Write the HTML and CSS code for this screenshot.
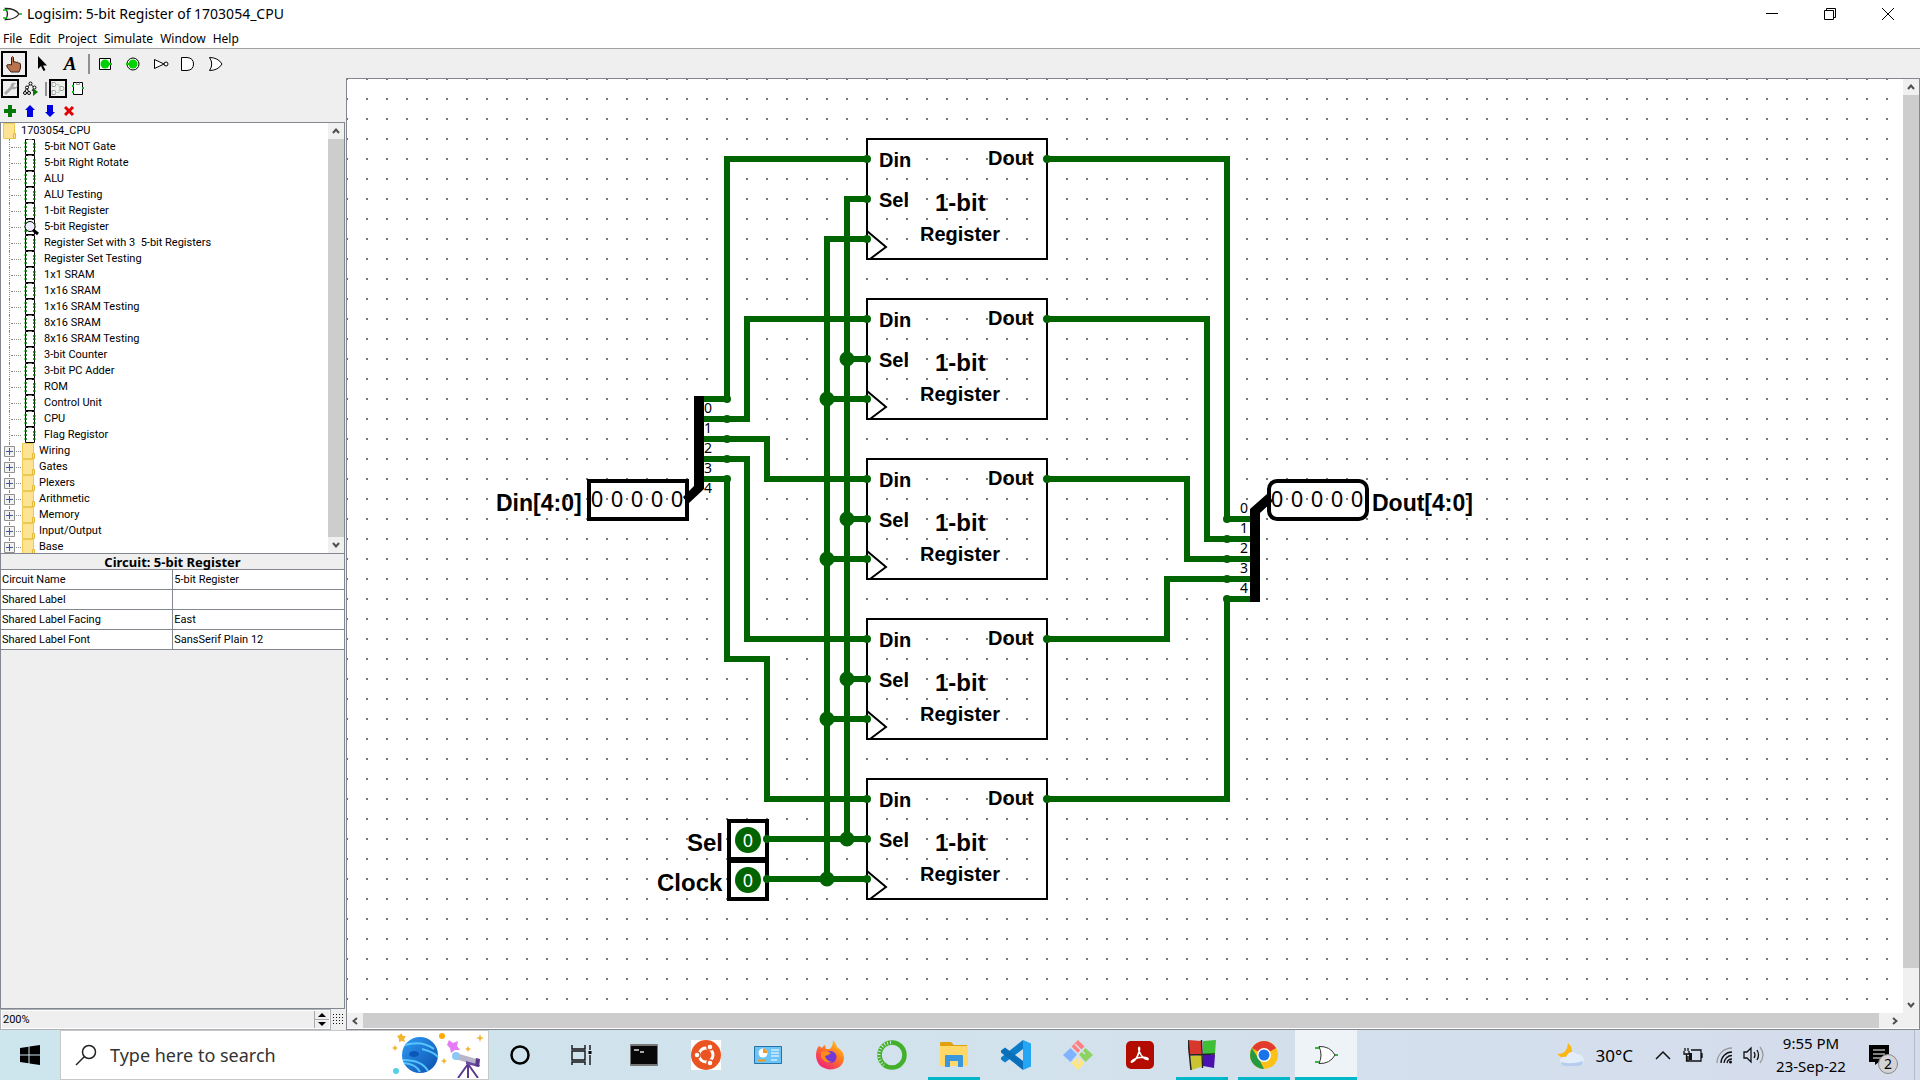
FILE: index.html
```html
<!DOCTYPE html>
<html lang="en">
<head>
<meta charset="utf-8">
<title>Logisim: 5-bit Register of 1703054_CPU</title>
<link rel="stylesheet" href="styles.css">
</head>
<body>
<svg class="defs" aria-hidden="true">
  <symbol id="i-chip" viewBox="0 0 13 16"><path d="M1.500.5H10.500V15.500H1.500z" fill="#fff" stroke="#000"/><path d="M4 .5H8" stroke="#888"/><path d="M0 4h3M0 8h3M0 12h3M9 5h3M9 8h3M9 12h3" stroke="#00b400"/><path d="M2 4h1M2 8h1M2 12h1M9 5h1M9 8h1M9 12h1" stroke="#040"/></symbol>
  <symbol id="i-folder" viewBox="0 0 13 16"><path d="M.5.5H11.500V15.500H.5z" fill="#ffe394" stroke="#ecc94f"/><path d="M10.500 10.500h2v5h-2z" fill="#ffe394" stroke="#e3b93a"/></symbol>
  <symbol id="i-plus" viewBox="0 0 11 11"><path d="M.5.5h10v10H.5z" fill="#f2f2f2" stroke="#919191"/><path d="M5.500 2v7M2 5.500h7" stroke="#3b5a9a"/></symbol>
  <symbol id="i-or" viewBox="0 0 20 16"><path d="M3.500 2.500C12 2.500 15 5 17 8C15 11 12 13.500 3.500 13.500C6 10 6 6 3.500 2.500Z" fill="#fff" stroke="#222" stroke-width="1.300"/><path d="M1 4h4M1 12h4M17 8h3" stroke="#00c400" stroke-width="1.500"/></symbol>
  <symbol id="i-up" viewBox="0 0 8 6"><path d="M1 5l3-3.500L7 5" fill="none" stroke="#505050" stroke-width="2"/></symbol>
  <symbol id="reg" overflow="visible"><path d="M0 0H180V120H0z" fill="none" stroke="#000" stroke-width="2"/><path d="M0 92L19 108L3 120" fill="none" stroke="#000" stroke-width="2"/></symbol>
</svg>

<header class="titlebar">
  <svg class="app-icon" width="20" height="16"><use href="#i-or"/></svg>
  <h1>Logisim: 5-bit Register of 1703054_CPU</h1>
  <div class="win-buttons">
    <button aria-label="Minimize"><svg width="12" height="12"><path d="M0 5.500H12" stroke="#000"/></svg></button>
    <button aria-label="Restore"><svg width="12" height="12"><path d="M.5 2.500h9v9h-9zM2.500 2.500V.5h9v9h-2" fill="none" stroke="#000"/></svg></button>
    <button aria-label="Close"><svg width="12" height="12"><path d="M0 0L12 12M12 0L0 12" stroke="#000"/></svg></button>
  </div>
</header>
<nav class="menubar">
  <button>File</button><button>Edit</button><button>Project</button><button>Simulate</button><button>Window</button><button>Help</button>
</nav>

<div class="toolbar">
  <button class="tool on" aria-label="Poke"><svg width="18" height="18"><path d="M6.500 10V2.500Q7.500.5 8.500 2.500V7Q10 6 11 7.500Q12.500 6.500 13.500 8Q15.500 7.500 15.500 10V13L14 17H6L2 12Q1 9.500 3.500 9.500z" fill="#b9744f" stroke="#3c1f12"/></svg></button>
  <button class="tool" aria-label="Select"><svg width="18" height="18"><path d="M5 1V14L8 11L10.500 16L12.500 15L10 10.500H14z"/></svg></button>
  <button class="tool letter" aria-label="Text">A</button>
  <span class="sep"></span>
  <button class="tool" aria-label="Input pin"><svg width="18" height="18"><path d="M3.500 3.500h11v11h-11z" fill="#fff" stroke="#000"/><circle cx="9" cy="9" r="4.500" fill="#00d200"/><path d="M9 9h7" stroke="#00d200" stroke-width="2"/></svg></button>
  <button class="tool" aria-label="Output pin"><svg width="18" height="18"><circle cx="9" cy="9" r="6" fill="#fff" stroke="#000"/><circle cx="9" cy="9" r="4.500" fill="#00d200"/><path d="M2 9h7" stroke="#00d200" stroke-width="2"/></svg></button>
  <button class="tool" aria-label="NOT gate"><svg width="18" height="18"><path d="M2.500 4.500L12 9L2.500 13.500z" fill="#fff" stroke="#000"/><circle cx="14" cy="9" r="2" fill="#fff" stroke="#000"/></svg></button>
  <button class="tool" aria-label="AND gate"><svg width="18" height="18"><path d="M1.500 2.500H7Q13.500 3 13.500 9T7 15.500H1.500z" fill="#fff" stroke="#000"/></svg></button>
  <button class="tool" aria-label="OR gate"><svg width="18" height="18"><path d="M1.500 2.500Q10 2.500 14 9Q10 15.500 1.500 15.500Q6 9 1.500 2.500z" fill="#fff" stroke="#000"/></svg></button>
</div>

<main class="workspace">
  <aside class="explorer">
    <div class="bar">
      <button class="small on" aria-label="Project view"><svg width="15" height="15"><path d="M2 13L8.500 6.500" stroke="#aaa" stroke-width="3"/><path d="M8 3Q10 1 13 2L10.500 4.500L11 6H13L14.500 4Q14.500 8 10.500 8.500L7 7z" fill="#aaa"/></svg></button>
      <button class="small" aria-label="Simulation view"><svg width="15" height="15"><path d="M7.500 3L4 6.500L1.500 11M4 6.500L5.500 11M7.500 3L11 6.500L9 10" fill="none" stroke="#000"/><g fill="#fff" stroke="#000"><circle cx="7.500" cy="2.500" r="1.500"/><circle cx="4" cy="6.500" r="1.500"/><circle cx="2" cy="12" r="1.500"/><circle cx="6" cy="12" r="1.500"/><circle cx="11.500" cy="6.500" r="1.500"/></g><path d="M10 7V15L15 11z" fill="#0a7a0a"/></svg></button>
      <span class="sep"></span>
      <button class="small on" aria-label="Edit layout"><svg width="15" height="15" fill="#f6f6f6" stroke="#a0a0a0"><path d="M1 1.500h3q2 1.500 0 4H1zM1 9.500h3q2 1.500 0 4H1zM9 5.500h3q2 1.500 0 4H9z"/><path d="M6 3.500h2v3M6 11.500h2v-3" fill="none" stroke="#a5dca5"/></svg></button>
      <button class="small" aria-label="Edit appearance"><svg width="13" height="15"><path d="M1.500 1.500h9v12h-9z" fill="#fff" stroke="#000"/><path d="M4.500 1.500v2h3v-2" fill="none" stroke="#999"/><path d="M0 5h2M10 7h2M0 11h2" stroke="#00c400" stroke-width="2"/></svg></button>
    </div>
    <div class="bar edit">
      <button class="small" aria-label="Add circuit"><svg width="12" height="12"><path d="M6 0V12M0 6H12" stroke="#087808" stroke-width="4"/></svg></button>
      <button class="small" aria-label="Move up"><svg width="10" height="12"><path d="M5 0L10 5H8V12H2V5H0z" fill="#0000e0"/></svg></button>
      <button class="small" aria-label="Move down"><svg width="10" height="12"><path d="M5 12L10 7H8V0H2V7H0z" fill="#0000e0"/></svg></button>
      <button class="small" aria-label="Remove circuit"><svg width="12" height="12"><path d="M1 2L9 10M9 2L1 10" stroke="#e00000" stroke-width="3"/></svg></button>
    </div>
    <div class="tree-box">
      <ul class="tree">
        <li class="root"><svg width="13" height="16"><use href="#i-folder"/></svg>1703054_CPU</li>
        <li class="leaf"><svg width="13" height="16"><use href="#i-chip"/></svg>5-bit NOT Gate</li>
        <li class="leaf"><svg width="13" height="16"><use href="#i-chip"/></svg>5-bit Right Rotate</li>
        <li class="leaf"><svg width="13" height="16"><use href="#i-chip"/></svg>ALU</li>
        <li class="leaf"><svg width="13" height="16"><use href="#i-chip"/></svg>ALU Testing</li>
        <li class="leaf"><svg width="13" height="16"><use href="#i-chip"/></svg>1-bit Register</li>
        <li class="leaf"><svg width="13" height="16" overflow="visible"><use href="#i-chip" width="13" height="16"/><circle cx="6" cy="7.500" r="5" fill="#eef" stroke="#000"/><path d="M9 11L14 15" stroke="#000" stroke-width="3"/></svg>5-bit Register</li>
        <li class="leaf"><svg width="13" height="16"><use href="#i-chip"/></svg>Register Set with 3&nbsp; 5-bit Registers</li>
        <li class="leaf"><svg width="13" height="16"><use href="#i-chip"/></svg>Register Set Testing</li>
        <li class="leaf"><svg width="13" height="16"><use href="#i-chip"/></svg>1x1 SRAM</li>
        <li class="leaf"><svg width="13" height="16"><use href="#i-chip"/></svg>1x16 SRAM</li>
        <li class="leaf"><svg width="13" height="16"><use href="#i-chip"/></svg>1x16 SRAM Testing</li>
        <li class="leaf"><svg width="13" height="16"><use href="#i-chip"/></svg>8x16 SRAM</li>
        <li class="leaf"><svg width="13" height="16"><use href="#i-chip"/></svg>8x16 SRAM Testing</li>
        <li class="leaf"><svg width="13" height="16"><use href="#i-chip"/></svg>3-bit Counter</li>
        <li class="leaf"><svg width="13" height="16"><use href="#i-chip"/></svg>3-bit PC Adder</li>
        <li class="leaf"><svg width="13" height="16"><use href="#i-chip"/></svg>ROM</li>
        <li class="leaf"><svg width="13" height="16"><use href="#i-chip"/></svg>Control Unit</li>
        <li class="leaf"><svg width="13" height="16"><use href="#i-chip"/></svg>CPU</li>
        <li class="leaf"><svg width="13" height="16"><use href="#i-chip"/></svg>Flag Registor</li>
        <li class="lib"><svg width="11" height="11"><use href="#i-plus"/></svg><svg width="13" height="16"><use href="#i-folder"/></svg>Wiring</li>
        <li class="lib"><svg width="11" height="11"><use href="#i-plus"/></svg><svg width="13" height="16"><use href="#i-folder"/></svg>Gates</li>
        <li class="lib"><svg width="11" height="11"><use href="#i-plus"/></svg><svg width="13" height="16"><use href="#i-folder"/></svg>Plexers</li>
        <li class="lib"><svg width="11" height="11"><use href="#i-plus"/></svg><svg width="13" height="16"><use href="#i-folder"/></svg>Arithmetic</li>
        <li class="lib"><svg width="11" height="11"><use href="#i-plus"/></svg><svg width="13" height="16"><use href="#i-folder"/></svg>Memory</li>
        <li class="lib"><svg width="11" height="11"><use href="#i-plus"/></svg><svg width="13" height="16"><use href="#i-folder"/></svg>Input/Output</li>
        <li class="lib"><svg width="11" height="11"><use href="#i-plus"/></svg><svg width="13" height="16"><use href="#i-folder"/></svg>Base</li>
      </ul>
      <div class="vbar">
        <button class="arrow" aria-label="Scroll up"><svg width="8" height="6"><use href="#i-up"/></svg></button>
        <div class="thumb full"></div>
        <button class="arrow down" aria-label="Scroll down"><svg width="8" height="6"><use href="#i-up"/></svg></button>
      </div>
    </div>
    <section class="props">
      <h2>Circuit: 5-bit Register</h2>
      <table>
        <tr><th scope="row">Circuit Name</th><td>5-bit Register</td></tr>
        <tr><th scope="row">Shared Label</th><td></td></tr>
        <tr><th scope="row">Shared Label Facing</th><td>East</td></tr>
        <tr><th scope="row">Shared Label Font</th><td>SansSerif Plain 12</td></tr>
      </table>
    </section>
    <div class="zoom">
      <div class="spinner">
        <input type="text" value="200%" aria-label="Zoom">
        <div class="steps">
          <button aria-label="Zoom in"><svg width="8" height="4"><path d="M4 0L8 4H0z"/></svg></button>
          <button aria-label="Zoom out"><svg width="8" height="4"><path d="M0 0H8L4 4z"/></svg></button>
        </div>
      </div>
      <button class="grid-toggle" aria-label="Show grid"><svg width="11" height="11" stroke="#111" stroke-dasharray="1 2"><path d="M0 .5H11M0 3.500H11M0 6.500H11M0 9.500H11"/></svg></button>
    </div>
  </aside>

  <section class="canvas-pane">
    <div class="canvas">
      <svg class="circuit" role="img" aria-label="5-bit register circuit">
        <defs><pattern id="dots" x="-1" y="-1" width="20" height="20" patternUnits="userSpaceOnUse"><path d="M0 0h2v2H0z" fill="#777"/></pattern></defs>
        <rect width="100%" height="100%" fill="url(#dots)"/>

        <g class="wire">
          <path d="M357 320H380V80H520"/>
          <path d="M357 340H400V240H520"/>
          <path d="M357 360H420V400H520"/>
          <path d="M357 380H400V560H520"/>
          <path d="M357 400H380V580H420V720H520"/>
          <path d="M520 120H500V760M500 280H520M500 440H520M500 600H520M422 760H520"/>
          <path d="M520 160H480V800M480 320H520M480 480H520M480 640H520M422 800H520"/>
          <path d="M700 80H880V440H903"/>
          <path d="M700 240H860V460H903"/>
          <path d="M700 400H840V480H903"/>
          <path d="M700 560H820V500H903"/>
          <path d="M700 720H880V520H903"/>
        </g>

        <use href="#reg" x="520" y="60"/>
        <use href="#reg" x="520" y="220"/>
        <use href="#reg" x="520" y="380"/>
        <use href="#reg" x="520" y="540"/>
        <use href="#reg" x="520" y="700"/>

        <path class="ends" d="M380 320h0M380 340h0M380 360h0M380 380h0M380 400h0M880 440h0M880 460h0M880 480h0M880 500h0M880 520h0M520 80h0M520 120h0M520 160h0M700 80h0M520 240h0M520 280h0M520 320h0M700 240h0M520 400h0M520 440h0M520 480h0M700 400h0M520 560h0M520 600h0M520 640h0M700 560h0M520 720h0M520 760h0M520 800h0M700 720h0"/>
        <path class="joints" d="M500 280h0M500 440h0M500 600h0M500 760h0M480 320h0M480 480h0M480 640h0M480 800h0"/>

        <g class="port"><text x="532" y="88">Din</text><text x="532" y="128">Sel</text><text x="641" y="86">Dout</text><text x="573" y="162">Register</text><text class="big" x="588" y="132">1-bit</text></g>
        <g class="port"><text x="532" y="248">Din</text><text x="532" y="288">Sel</text><text x="641" y="246">Dout</text><text x="573" y="322">Register</text><text class="big" x="588" y="292">1-bit</text></g>
        <g class="port"><text x="532" y="408">Din</text><text x="532" y="448">Sel</text><text x="641" y="406">Dout</text><text x="573" y="482">Register</text><text class="big" x="588" y="452">1-bit</text></g>
        <g class="port"><text x="532" y="568">Din</text><text x="532" y="608">Sel</text><text x="641" y="566">Dout</text><text x="573" y="642">Register</text><text class="big" x="588" y="612">1-bit</text></g>
        <g class="port"><text x="532" y="728">Din</text><text x="532" y="768">Sel</text><text x="641" y="726">Dout</text><text x="573" y="802">Register</text><text class="big" x="588" y="772">1-bit</text></g>

        <path d="M347 317H357V410L341 425L336 418L347 407z"/>
        <path d="M903 430L920 415L926 422L913 434V523H903z"/>
        <g class="bit"><text x="357" y="334">0</text><text x="357" y="354">1</text><text x="357" y="374">2</text><text x="357" y="394">3</text><text x="357" y="414">4</text></g>
        <g class="bit"><text x="893" y="434">0</text><text x="893" y="454">1</text><text x="893" y="474">2</text><text x="893" y="494">3</text><text x="893" y="514">4</text></g>

        <g fill="none" stroke="#000" stroke-width="4">
          <rect x="242" y="402" width="98" height="38"/>
          <rect x="922" y="402" width="98" height="38" rx="8"/>
          <rect x="382" y="742" width="38" height="38"/>
          <rect x="382" y="782" width="38" height="38"/>
        </g>
        <g class="value"><text x="250" y="428">0</text><text x="270" y="428">0</text><text x="290" y="428">0</text><text x="310" y="428">0</text><text x="330" y="428">0</text></g>
        <g class="value"><text x="930" y="428">0</text><text x="950" y="428">0</text><text x="970" y="428">0</text><text x="990" y="428">0</text><text x="1010" y="428">0</text></g>
        <circle cx="401" cy="761" r="13" fill="#006400"/><circle cx="401" cy="801" r="13" fill="#006400"/>
        <path class="ends" d="M420 760h0M420 800h0"/>
        <g class="value lit"><text x="401" y="768">0</text><text x="401" y="808">0</text></g>
        <g class="label"><text x="340" y="772">Sel</text><text x="310" y="812">Clock</text></g>
        <g class="label bus"><text x="149" y="432">Din[4:0]</text><text x="1025" y="432">Dout[4:0]</text></g>
      </svg>
      <div class="vbar">
        <button class="arrow" aria-label="Scroll up"><svg width="8" height="6"><use href="#i-up"/></svg></button>
        <div class="thumb tall"></div><div class="rest"></div>
        <button class="arrow down" aria-label="Scroll down"><svg width="8" height="6"><use href="#i-up"/></svg></button>
      </div>
    </div>
    <div class="hbar">
      <button class="arrow left" aria-label="Scroll left"><svg width="8" height="6"><use href="#i-up"/></svg></button>
      <div class="thumb wide"></div>
      <button class="arrow right" aria-label="Scroll right"><svg width="8" height="6"><use href="#i-up"/></svg></button>
    </div>
  </section>
</main>

<footer class="taskbar">
  <button class="start" aria-label="Start"><svg width="20" height="20"><path d="M0 3L8.500 1.800V9.500H0zM9.500 1.600L20 0V9.500H9.500zM0 10.500H8.500V18.200L0 17zM9.500 10.500H20V20L9.500 18.400z"/></svg></button>
  <div class="search">
    <svg width="22" height="22"><circle cx="14" cy="8" r="6.500" fill="none" stroke="#222" stroke-width="1.500"/><path d="M9.500 12.500L1 21" stroke="#222" stroke-width="1.500"/></svg>
    <input type="text" placeholder="Type here to search" aria-label="Search">
    <svg width="96" height="46">
      <defs><linearGradient id="pl" x1="0" x2="1" y1="0" y2="1"><stop offset="0" stop-color="#2f9cf4"/><stop offset="1" stop-color="#0b4fae"/></linearGradient></defs>
      <circle cx="28" cy="23" r="18" fill="url(#pl)"/><path d="M13 13Q30 8 42 17M11 28Q30 28 36 39M12 31Q24 32 28 40M30 17Q42 20 46 25" fill="none" stroke="#55c4ff" stroke-width="2"/><ellipse cx="22" cy="22" rx="5" ry="3" fill="#0a57b8"/>
      <g fill="#f2b531"><path d="M9 1l2 3 3 0-2 3 1 3-3-1-3 1 0-3-2-3 3-1zM88 2l1 3 3 1-3 1-1 3-1-3-3-1 3-1zM3 13l1 2 2 1-2 1-1 2-1-2-2-1 2-1zM76 14l1 2 2 1-2 1-1 2-1-2-2-1 2-1zM52 26l1 2 2 1-2 1-1 2-1-2-2-1 2-1z"/><circle cx="50" cy="4" r="3" fill="#ffab00"/></g>
      <path d="M57 8l4 3 5-2-1 5 3 4-5 0-4 3-1-5-3-3z" fill="#e57cf5"/><circle cx="4" cy="39" r="3" fill="#55cfe8"/>
      <path d="M76 32L66 46M76 32V46M76 32L86 46" stroke="#5b3a8e" stroke-width="2"/><path d="M64 21L88 28L87 34L63 27z" fill="#b9b6c9"/><path d="M74 29L88 33L87 35L74 32z" fill="#6a4a9e"/><circle cx="64" cy="24" r="4" fill="#8cc8f5"/><path d="M84 26l4 1-1 8-4-1z" fill="#5b3a8e"/>
    </svg>
  </div>
  <div class="apps">
    <button aria-label="Cortana"><svg width="20" height="20"><circle cx="10" cy="10" r="8.500" fill="none" stroke="#000" stroke-width="2.500"/></svg></button>
    <button aria-label="Task View"><svg width="22" height="20" fill="none" stroke="#111" stroke-width="1.400"><path d="M1 0V4H14V0M1 6H14V15H1zM1 20V17H14V20M19 0V5M19 10V20"/><path d="M17.500 6h3v3h-3z" fill="#000" stroke="none"/></svg></button>
    <button aria-label="Terminal"><svg width="28" height="22"><rect width="28" height="22" rx="1" fill="#777"/><rect x="1" y="2" width="26" height="18" fill="#080808"/><path d="M4 6h5M10 8h4" stroke="#ddd" stroke-width="1.500"/></svg></button>
    <button aria-label="Ubuntu"><svg width="30" height="30"><path d="M0 0H30V30H0z" fill="#fff"/><circle cx="15" cy="15" r="15" fill="#e95420"/><circle cx="15" cy="15" r="7" fill="none" stroke="#fff" stroke-width="3"/><g fill="#fff" stroke="#e95420" stroke-width="1.500"><circle cx="6" cy="15" r="3"/><circle cx="19" cy="7" r="3"/><circle cx="19" cy="23" r="3"/></g></svg></button>
    <button aria-label="Control Panel"><svg width="28" height="18"><path d="M.5.5h27v17H.5z" fill="#6cc3f5" stroke="#2374ad"/><circle cx="9" cy="7" r="4.500" fill="#fff"/><path d="M9 7V2.500A4.500 4.500 0 0 1 13.500 7z" fill="#f39a1e"/><path d="M17 4h8M17 7h8M17 10h8M17 14h6" stroke="#fff"/><path d="M4 14.500h8" stroke="#f39a1e" stroke-width="2"/></svg></button>
    <button aria-label="Firefox"><svg width="28" height="30"><defs><linearGradient id="ff" x1="1" x2=".3" y1="0" y2="1"><stop offset="0" stop-color="#ffe226"/><stop offset=".5" stop-color="#ff7a1f"/><stop offset="1" stop-color="#f0227a"/></linearGradient></defs><path d="M3 6L6 8Q8 5 9 5L10 9H14Q17 6 17 0Q20 3 21 7Q28 11 28 18Q27 29 14 29.500Q1 28 0 16Q0 9 3 6z" fill="url(#ff)"/><circle cx="14.500" cy="17" r="6" fill="#7339d6"/><path d="M5 12Q10 10 15 13Q12 16 9 16Q10 21 16 22Q9 24 5 17z" fill="#ff8b1d"/></svg></button>
    <button aria-label="Anaconda"><svg width="30" height="30"><circle cx="15" cy="15" r="12.500" fill="none" stroke="#43b02a" stroke-width="4.500"/><path d="M14 2.500A12.500 12.500 0 0 0 7 25" fill="none" stroke="#d5e6ee" stroke-width="3" stroke-dasharray="1 2"/></svg></button>
    <button class="run" aria-label="File Explorer"><svg width="28" height="26"><path d="M0 1Q0 0 1 0H11L14 3H27V8H0z" fill="#e0a010"/><path d="M0 4H28V24H0z" fill="#ffd868"/><path d="M5 25V14Q5 13 6 13H22Q23 13 23 14V25H18V19H10V25z" fill="#3a96dd"/></svg></button>
    <button aria-label="Visual Studio Code"><svg width="30" height="30"><path d="M22 0V9L4 22.500L0 19.500V17.500z" fill="#0a7cc8"/><path d="M22 30V21L4 7.500L0 10.500V12.500z" fill="#0a6fb8"/><path d="M22 0L30 3.500V26.500L22 30z" fill="#24a6f2"/></svg></button>
    <button aria-label="Git"><svg width="30" height="30"><path d="M15 0L21.500 6.500L15 13L8.500 6.500z" fill="#ff8080"/><path d="M7.500 8L14 14.500L7.500 22L0 15z" fill="#80b3ff"/><path d="M22.500 8L30 15L22.500 22L16 14.500z" fill="#8dd35f"/><path d="M15 16.500L21.500 23L15 30L8.500 23z" fill="#ffe680"/><path d="M12 4L18 10L15 15V24M18 10L22 14" fill="none" stroke="#d8e2ec" stroke-width="1.500"/></svg></button>
    <button aria-label="Acrobat"><svg width="28" height="28"><rect width="28" height="28" rx="5" fill="#b30b00"/><path d="M6 21C10 20 14 11 13.500 7C13 5 12 8 13.500 11C15 15 19 19 22 18.500C23 16 14 15 8 18.500C5 20 5 22 6 21z" fill="none" stroke="#fff" stroke-width="1.600"/></svg></button>
    <button class="run" aria-label="Code::Blocks"><svg width="28" height="30"><path d="M0 0L13 1V14L1 15z" fill="#d8382c"/><path d="M15 1L28 0L27 14L15 14z" fill="#3fbf36"/><path d="M2 16L13 15V27L3 30z" fill="#c9c430"/><path d="M15 15H27L26 28L15 26z" fill="#4a12ae"/><path d="M13.500 0L14.500 28M1 15L27 14M0 0L3 30" stroke="#222" stroke-width="1.500"/></svg></button>
    <button class="run" aria-label="Chrome"><svg width="28" height="28"><circle cx="14" cy="14" r="14" fill="#fbc116"/><path d="M14 14L1.900 7A14 14 0 0 1 26.100 7z" fill="#e33b2e"/><path d="M1.900 7L10 20L14 28A14 14 0 0 1 1.900 7z" fill="#269a43"/><path d="M14 7H26.100L14 9z" fill="#e33b2e"/><circle cx="14" cy="14" r="7" fill="#fff"/><circle cx="14" cy="14" r="5.500" fill="#1a73e8"/></svg></button>
    <button class="run active" aria-label="Logisim"><svg width="25" height="20"><path d="M5 1.500Q16 1 21 10Q16 19 5 18.500Q9 10 5 1.500z" fill="#fff" stroke="#333"/><path d="M1 3h4M1 17h4M21 10h3" stroke="#00a000" stroke-width="1.500"/></svg></button>
  </div>
  <div class="tray">
    <svg width="28" height="24"><path d="M11 0Q18 6 13 13Q7 18 0 11Q10 12 11 0z" fill="#fcb714"/><path d="M8 23Q2 22 3 17Q5 13 9 14Q13 6 20 11Q27 11 27 18Q26 23 21 23z" fill="#e3edfa"/><path d="M8 23Q3 22 4 19Q15 22 26 18Q26 23 21 23z" fill="#b6cdf0"/></svg>
    <span class="temp">30°C</span>
    <svg class="chev" width="16" height="10"><path d="M1 9L8 2L15 9" fill="none" stroke="#111" stroke-width="1.500"/></svg>
    <svg class="batt" width="20" height="14" fill="none" stroke="#111" stroke-width="1.300"><path d="M8 2H18V13H5V8M19 5V10M1 3V6H6V3M2 0V3M5 0V3M3.500 6V13H5"/><path d="M6 5h3v7H6z" fill="#111" stroke="none"/></svg>
    <svg class="wifi" width="17" height="17" fill="none" stroke-width="1.300"><path d="M1 16A15 15 0 0 1 16 1" stroke="#999"/><path d="M5 16A11 11 0 0 1 16 5M8 16A8 8 0 0 1 16 8.500M11 16A5 5 0 0 1 16 12" stroke="#111"/><circle cx="14.500" cy="15" r="1.500" fill="#111"/></svg>
    <svg class="vol" width="21" height="18" fill="none" stroke="#111" stroke-width="1.300"><path d="M1 6H4L8 2V16L4 12H1zM11 6Q13 9 11 12M14 4Q17 9 14 14"/><path d="M17 1Q23 9 17 17" stroke="#999"/></svg>
    <div class="clock"><span>9:55 PM</span><span>23-Sep-22</span></div>
    <button class="note" aria-label="Notifications"><svg width="20" height="20"><path d="M0 0H20V17H10L6 20V17H0z"/><path d="M4 5H16M4 9H16M4 13H12" stroke="#fff"/></svg><span class="badge">2</span></button>
  </div>
</footer>
</body>
</html>
```
FILE: styles.css
```css
* { box-sizing: border-box; }
body {
  margin: 0;
  height: 100vh;
  display: flex;
  flex-direction: column;
  overflow: hidden;
  background: #efefef;
  color: #000;
  font-family: "Noto Sans", sans-serif;
  font-size: 11px;
}
svg { display: block; flex: none; }
.defs { position: absolute; width: 0; height: 0; }
button {
  margin: 0;
  padding: 0;
  border: 0;
  background: none;
  color: inherit;
  font: inherit;
  display: flex;
  align-items: center;
  justify-content: center;
}

/* window frame */
.titlebar { display: flex; align-items: center; height: 28px; padding-left: 2px; background: #fff; flex: none; }
.titlebar h1 { margin: 0 0 0 5px; font-size: 14px; font-weight: 400; line-height: 28px; }
.win-buttons { display: flex; margin-left: auto; padding-right: 3px; }
.win-buttons button { width: 58px; height: 28px; }
.menubar { display: flex; gap: 7px; height: 21px; padding-left: 3px; background: #fff; border-bottom: 1px solid #a0a0a0; flex: none; font-size: 12px; }

/* main toolbar */
.toolbar { display: flex; align-items: center; height: 29px; padding: 1px 0 0 1px; flex: none; gap: 2px; }
.tool { width: 26px; height: 26px; }
.tool.on, .small.on { border: 2px solid #000; }
.letter { font: italic bold 19px "Liberation Serif", serif; }
.sep { width: 2px; height: 20px; background: #909090; margin: 0 0 0 3px; }

.workspace { display: flex; flex: 1; min-height: 0; }
.explorer { display: flex; flex-direction: column; width: 346px; flex: none; font-family: Roboto, sans-serif; }
.bar { display: flex; gap: 2px; height: 20px; padding: 1px 0 0 1px; flex: none; }
.bar.edit { height: 24px; padding-top: 3px; }
.small { width: 18px; height: 19px; }
.bar .sep { height: 14px; margin: 3px 0 0 4px; }

/* project tree */
.tree-box { display: flex; height: 432px; flex: none; border: 1px solid #828790; margin-right: 1px; background: #fff; overflow: hidden; }
.tree { flex: 1; margin: 0; padding: 0; list-style: none; }
.tree li { display: flex; align-items: center; height: 16px; line-height: 16px; white-space: nowrap; position: relative; }
.root { padding-left: 2px; gap: 5px; }
.leaf { padding-left: 23px; gap: 7px; }
.lib { padding-left: 3px; gap: 7px; }
.lib svg + svg { margin-right: -3px; }
.leaf::before, .lib::before { content: ""; position: absolute; left: 8px; top: 0; height: 16px; border-left: 1px dotted #888; }
.leaf::after, .lib::after { content: ""; position: absolute; left: 10px; top: 8px; width: 10px; border-top: 1px dotted #888; }
.lib svg { position: relative; z-index: 1; }

/* scroll bars */
.vbar { display: flex; flex-direction: column; width: 16px; background: #f0f0f0; flex: none; }
.hbar { display: flex; height: 16px; padding-right: 16px; background: #f0f0f0; border-bottom: 1px solid #fff; flex: none; }
.arrow { width: 16px; height: 16px; flex: none; }
.thumb { background: #cdcdcd; }
.thumb.full { flex: 1; }
.thumb.tall { flex: 871 1 0; }
.rest { flex: 29 1 0; }
.thumb.wide { flex: 1; margin-right: 8px; }
.down svg { transform: rotate(180deg); }
.left svg { transform: rotate(-90deg); }
.right svg { transform: rotate(90deg); }

/* attribute table */
.props { flex: 1; min-height: 0; margin-right: 1px; border: 1px solid #828790; border-top: 0; }
.props h2 { margin: 0; height: 15px; font: bold 13px/16px "Noto Sans", sans-serif; text-align: center; }
.props table { width: 344px; border-collapse: collapse; table-layout: fixed; }
.props th, .props td { height: 20px; padding: 0 1px; border: 1px solid #828790; background: #fff; font-weight: 400; text-align: left; line-height: 18px; }
.props th { border-left: 0; }

.zoom { display: flex; height: 21px; flex: none; gap: 2px; }
.spinner { display: flex; width: 331px; border: 1px solid #adb2b8; padding: 1px; background: #fff; }
.spinner input { flex: 1; min-width: 0; padding: 0 0 0 1px; border: 0; background: #efefef; font: inherit; }
.steps { display: flex; flex-direction: column; width: 15px; background: #efefef; border-left: 1px solid #aaa; }
.steps button { flex: 1; }
.steps button + button { border-top: 1px solid #aaa; }
.grid-toggle { width: 11px; height: 20px; }

/* circuit canvas */
.canvas-pane { display: flex; flex-direction: column; flex: 1; min-width: 0; border: 1px solid #828790; }
.canvas { display: flex; flex: 1; min-height: 0; background: #fff; }
.circuit { flex: 1; min-width: 0; height: 100%; }
.wire { fill: none; stroke: #006400; stroke-width: 6; }
.ends, .joints { stroke: #006400; stroke-linecap: round; stroke-width: 8; }
.joints { stroke-width: 15; }
.port, .label { font: bold 20px "Liberation Sans", sans-serif; }
.label, .port .big { font-size: 24px; }
.label.bus { font-size: 23px; }
.bit { font-size: 14px; }
.value { font-size: 22px; text-anchor: middle; }
.lit { font-size: 18px; fill: #fff; }

/* taskbar */
.taskbar { display: flex; height: 50px; flex: none; background: linear-gradient(90deg, #cde5ed, #d2e2ec 50%, #d5dcec); }
.start { width: 60px; }
.search { display: flex; align-items: center; width: 429px; padding-left: 14px; background: #fff; border: 1px solid #c8c8c8; }
.search input { flex: 1; min-width: 0; margin-left: 13px; padding: 0; border: 0; background: none; font: 18px "Noto Sans", sans-serif; }
.search input::placeholder { color: #333; opacity: 1; }
.apps { display: flex; }
.apps button { width: 62px; }
.run { background: linear-gradient(#00b7c9, #00b7c9) center bottom / 52px 3px no-repeat; }
.run.active { background: linear-gradient(#00b7c9, #00b7c9) center bottom / 62px 3px no-repeat, #eef3f8; }
.tray { display: flex; align-items: center; margin-left: auto; margin-right: 5px; padding-right: 25px; border-right: 1px solid #b4bccb; }
.temp { margin-left: 11px; font-size: 17px; }
.chev { margin-left: 22px; }
.batt { margin-left: 12px; }
.wifi { margin-left: 13px; }
.vol { margin-left: 10px; }
.clock { display: flex; flex-direction: column; width: 94px; text-align: center; font-size: 15px; line-height: 23px; }
.note { position: relative; margin-left: 11px; }
.badge { position: absolute; left: 9px; top: 9px; width: 20px; height: 20px; border: 1px solid #888; border-radius: 10px; background: #d4d4d8; font-size: 14px; line-height: 18px; text-align: center; }
```
